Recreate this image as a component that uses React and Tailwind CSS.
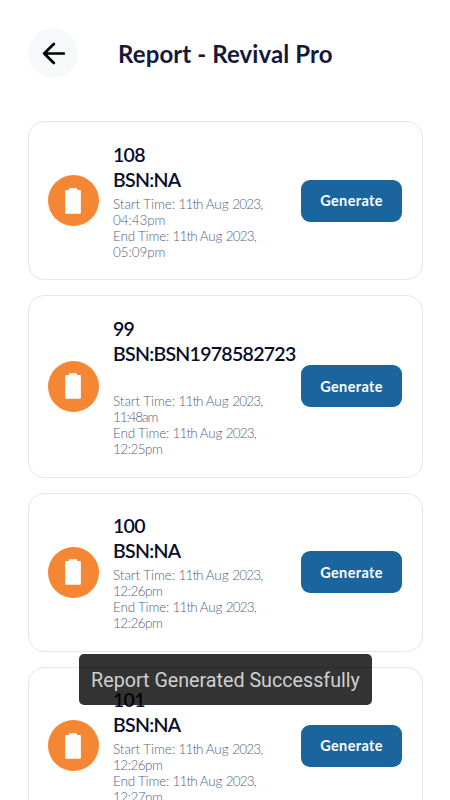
const reports = [
  {
    id: "108",
    bsn: "NA",
    start: "04:43pm",
    end: "05:09pm",
  },
  {
    id: "99",
    bsn: "BSN1978582723",
    start: "11:48am",
    end: "12:25pm",
    long: true,
  },
  {
    id: "100",
    bsn: "NA",
    start: "12:26pm",
    end: "12:26pm",
  },
  {
    id: "101",
    bsn: "NA",
    start: "12:26pm",
    end: "12:27pm",
  },
];

function BatteryIcon() {
  return (
    <div className="flex h-[51px] w-[51px] shrink-0 items-center justify-center rounded-full bg-[#f58633]">
      <svg
        className="mr-px"
        width="16"
        height="26"
        viewBox="0 0 16 26"
        fill="#fff"
      >
        <path d="M4 0.2h8v1.900h2.900q1 0 1 1v21.700q0 1-1 1H1.200q-1 0-1-1V3.100q0-1 1-1H4z" />
      </svg>
    </div>
  );
}

function Time({ value }) {
  if (value.startsWith("11")) {
    return <p className="tracking-[-1.100px]">{value}</p>;
  }
  if (value.startsWith("1")) {
    return <p className="tracking-[-0.500px]">{value}</p>;
  }
  return <p>{value}</p>;
}

function DateLine({ label }) {
  return (
    <p className={label === "End" ? "tracking-[-0.180px]" : ""}>
      {label} Time: <span className="tracking-[-0.900px]">11th</span> Aug{" "}
      <span className="tracking-[-0.800px]">2023,</span>
    </p>
  );
}

function ReportCard({ report }) {
  return (
    <div
      className={
        report.long
          ? "flex h-[182.700px] shrink-0 items-center rounded-[16px] border border-[#e6e6e9] pl-[19px] pr-5"
          : "flex h-[158.700px] shrink-0 items-center rounded-[16px] border border-[#e6e6e9] pl-[19px] pr-5"
      }
    >
      <BatteryIcon />

      <div className="ml-[14px] w-[188px] shrink-0 whitespace-nowrap">
        <div className="text-[19.500px] leading-[25px] font-semibold tracking-[-0.720px] text-[#070d2b]">
          <h2>{report.id}</h2>
          <h2>BSN:{report.bsn}</h2>
        </div>
        <div
          className={
            report.long
              ? "mt-[27.500px] text-[13.500px] leading-4 font-light tracking-[-0.070px] text-[#55617c]"
              : "mt-[3.500px] text-[13.500px] leading-4 font-light tracking-[-0.070px] text-[#55617c]"
          }
        >
          <DateLine label="Start" />
          <Time value={report.start} />
          <DateLine label="End" />
          <Time value={report.end} />
        </div>
      </div>

      <button className="h-[42px] w-[101px] shrink-0 rounded-[9px] bg-[#1a659e] pt-px text-[14.500px] font-bold tracking-[0.350px] text-white">
        Generate
      </button>
    </div>
  );
}

function App() {
  return (
    <div className="relative flex h-[800px] w-[450px] flex-col overflow-hidden bg-white font-['Lato','Open_Sans',sans-serif]">
      <header className="flex h-[121.450px] shrink-0 items-start pt-7 pl-7">
        <button className="flex h-[50px] w-[50px] items-center justify-center rounded-full bg-[#f7f8fa]">
          <svg
            width="24"
            height="24"
            viewBox="0 0 24 24"
            fill="none"
            stroke="#000"
            strokeWidth="2.700"
            strokeLinecap="round"
            strokeLinejoin="round"
          >
            <path d="M12.800 3L3.200 12.500l9.600 9.500M3.200 12.500H22.800" />
          </svg>
        </button>
        <h1 className="ml-10 text-[24px] leading-[52px] font-bold tracking-[0.100px] whitespace-nowrap text-[#14193a]">
          Report - Revival Pro
        </h1>
      </header>

      <main className="flex flex-col gap-[15px] px-7 pr-[27px]">
        {reports.map((report) => (
          <ReportCard key={report.id} report={report} />
        ))}
      </main>

      <div className="absolute top-[654px] left-[79px] flex h-[51px] w-[293px] items-center justify-center rounded-[5px] bg-black/80 pt-0.5 font-['Roboto',sans-serif] text-[19.700px] whitespace-nowrap text-[#cfcfcf]">
        Report Generated Successfully
      </div>
    </div>
  );
}

export default App;
